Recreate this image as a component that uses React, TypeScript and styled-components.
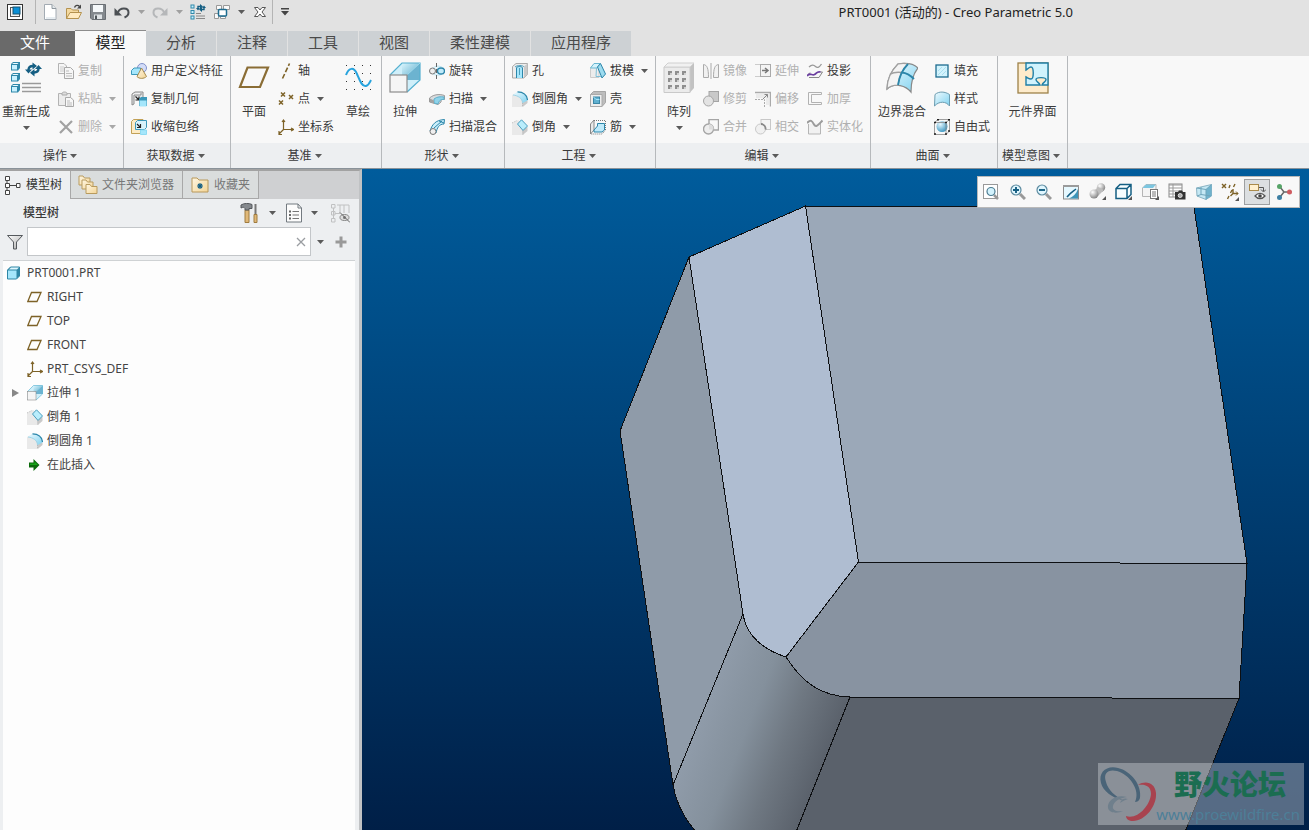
import React from "react";
import styled, { createGlobalStyle } from "styled-components";

const GlobalStyle = createGlobalStyle`
  * { box-sizing: border-box; }
  body {
    margin: 0;
    background: #e2e2e2;
    color: #3a3a3a;
    font: 12px/18px "Noto Sans", "Noto Sans CJK SC", sans-serif;
  }
  button, input {
    font: inherit;
    color: inherit;
    border: 0;
    padding: 0;
    margin: 0;
    background: none;
  }
  h1, h2, ul { margin: 0; padding: 0; font: inherit; list-style: none; }
  svg { display: block; flex: none; }
`;

/* ---------- icons ---------- */

type IconProps = { size?: number };

const S = ({ size = 16, box = 16, children }: { size?: number; box?: number; children: React.ReactNode }) => (
  <svg width={size} height={size} viewBox={`0 0 ${box} ${box}`} fill="none" aria-hidden="true">
    {children}
  </svg>
);

const Arrow = ({ color = "#5a5a5a" }: { color?: string }) => (
  <svg width="7" height="4" viewBox="0 0 7 4" aria-hidden="true">
    <path d="M0 0H7L3.5 4Z" fill={color} />
  </svg>
);

const HiddenDefs = styled.svg`
  position: absolute;
`;

const IconDefs = () => (
  <HiddenDefs width="0" height="0" aria-hidden="true">
    <defs>
      <linearGradient id="ice" x1="0" y1="0" x2="1" y2="1">
        <stop offset="0" stopColor="#f0fbff" />
        <stop offset="1" stopColor="#7fd2f0" />
      </linearGradient>
      <linearGradient id="iceDeep" x1="0" y1="0" x2="1" y2="1">
        <stop offset="0" stopColor="#d9f4fc" />
        <stop offset="1" stopColor="#4aa3c6" />
      </linearGradient>
      <linearGradient id="steel" x1="0" y1="0" x2="1" y2="1">
        <stop offset="0" stopColor="#ffffff" />
        <stop offset="1" stopColor="#a9a9a9" />
      </linearGradient>
      <linearGradient id="gold" x1="0" y1="0" x2="1" y2="1">
        <stop offset="0" stopColor="#fff6e2" />
        <stop offset="1" stopColor="#f3d596" />
      </linearGradient>
      <radialGradient id="ball" cx=".35" cy=".3" r=".8">
        <stop offset="0" stopColor="#e6f8ff" />
        <stop offset="1" stopColor="#2f8fbd" />
      </radialGradient>
      <radialGradient id="grayBall" cx=".35" cy=".3" r=".8">
        <stop offset="0" stopColor="#ffffff" />
        <stop offset="1" stopColor="#777777" />
      </radialGradient>
    </defs>
  </HiddenDefs>
);

const AppIcon = () => (
  <S>
    <rect x=".5" y=".5" width="15" height="15" fill="#fff" stroke="#333" />
    <rect x="3.5" y="3.5" width="9" height="9" fill="#f4f4f4" stroke="#555" />
    <rect x="6" y="3" width="7" height="7" fill="#0a8fd6" stroke="#14506e" />
  </S>
);
const NewIcon = () => (
  <S>
    <path d="M2.500.5H10L14 4.500V15.500H2.500Z" fill="#fff" stroke="#a3abb3" />
    <path d="M10 .5V4.500H14" fill="#e3e8ec" stroke="#8f979e" />
    <path d="M4 13H13V15H4Z" fill="#e8eef2" />
  </S>
);
const OpenIcon = () => (
  <S>
    <path d="M.5 14.500V4.500H5L6.500 6H12.500V14.500Z" fill="#f4d9a0" stroke="#b4924f" />
    <path d="M.5 14.500L4 8.500H15.500L12.500 14.500Z" fill="#ffeac0" stroke="#b4924f" />
    <path d="M8.500 3.500C9.500 1 12 .8 13.500 2.500" stroke="#444" strokeWidth="1.400" />
    <path d="M15 .5V4.500H11Z" fill="#444" />
  </S>
);
const SaveIcon = () => (
  <S>
    <path d="M.5.5H15.500V15.500H2L.5 14Z" fill="#84898e" stroke="#6a6f74" />
    <path d="M3 1H13V8H3Z" fill="#f5f8fa" />
    <path d="M4 10.500H12V15H4Z" fill="#dfe3e6" />
    <path d="M5 11.500H7V15H5Z" fill="#50565b" />
  </S>
);
const UndoIcon = () => (
  <S>
    <path d="M4 8.500C6 3 14.500 3.500 14.500 8.500C14.500 11 13 12.500 10.500 13.500" stroke="#4b4f53" strokeWidth="2" />
    <path d="M.5 4V11.500H8Z" fill="#4b4f53" />
  </S>
);
const RedoIcon = () => (
  <S>
    <path d="M12 8.500C10 3 1.500 3.500 1.500 8.500C1.500 11 3 12.500 5.500 13.500" stroke="#b5b7b9" strokeWidth="2" />
    <path d="M15.500 4V11.500H8Z" fill="#b5b7b9" />
  </S>
);
const RegenSmallIcon = () => (
  <S>
    {[1, 6.500, 12].map((y) => (
      <rect key={y} x="1" y={y} width="3" height="3" fill="#c9f1ff" stroke="#2f88aa" />
    ))}
    <path d="M6 9.500H11M6 12H15M6 14.500H15" stroke="#888" />
    <path d="M8 4.500V2.500H10.500M14 3V5.500H11.500" stroke="#155f83" strokeWidth="1.400" />
    <path d="M10 0L13 2.500L10 5ZM12 3.500V8L9 5.500ZM6 4H10L8 6.500ZM12 4H16L14 1.500Z" fill="#155f83" />
  </S>
);
const WindowsIcon = () => (
  <S>
    <path d="M2.500 1.500H7.500V5.500H2.500ZM9.500 1.500H15.500V5.500H9.500ZM.5 9.500H4.500V14.500H.5ZM6.500 12.500H11.500V14.500H6.500Z" fill="#fafafa" stroke="#999" />
    <rect x="4.500" y="5.500" width="8" height="6.500" rx="1" fill="#fff" stroke="#1d6c90" strokeWidth="1.500" />
  </S>
);
const CloseWinIcon = () => (
  <S>
    <path
      d="M2.500 3.500H6L8 6L10 3.500H13.500L10 8L13.500 12.500H10L8 10L6 12.500H2.500L6 8Z"
      fill="#fff"
      stroke="#555"
    />
  </S>
);
const MoreIcon = () => (
  <S size={10} box={10}>
    <path d="M1 1H9V2.500H1ZM1 4H9L5 8.500Z" fill="#444" />
  </S>
);

const cube = (x: number, y: number) => (
  <g key={`${x}-${y}`}>
    <path d={`M${x} ${y + 2}L${x + 2} ${y}H${x + 9}V${y + 6}L${x + 7} ${y + 8.500}H${x}Z`} fill="#2f88aa" />
    <path d={`M${x + 1} ${y + 3}H${x + 6}V${y + 7.500}H${x + 1}Z`} fill="#c9f1ff" />
    <path d={`M${x + 1} ${y + 2}L${x + 2.500} ${y + 1}H${x + 7.500}L${x + 6.500} ${y + 2}Z`} fill="#eefbff" />
  </g>
);
const RegenIcon = () => (
  <S size={32} box={32}>
    {[0, 11, 22].map((y) => cube(1, y))}
    <path d="M12 21.500H31M12 25.500H31M12 29.500H31" stroke="#9a9a9a" strokeWidth="1.400" />
    <path d="M18.500 8C18.500 5 20 4 23 4M28.500 6.500C28.500 9.500 27 10.500 24 10.500" stroke="#155f83" strokeWidth="2.400" />
    <path d="M22.500 .5L27 4L22.500 7.500ZM24.500 7V14.500L20 10.800ZM15 7.500H22L18.500 11.500ZM25 7H32L28.500 3Z" fill="#155f83" />
  </S>
);
const CopyIcon = () => (
  <S>
    <path d="M.5.5H6L8.500 3V10.500H.5Z" fill="#f6f6f6" stroke="#b3b3b3" />
    <path d="M2 4H6M2 6H6M2 8H6" stroke="#ccc" />
    <path d="M6.500 4.500H12.500L15.500 7.500V15.500H6.500Z" fill="#f6f6f6" stroke="#a9a9a9" />
    <path d="M8 8H11M8 10.500H14M8 13H14" stroke="#bbb" />
  </S>
);
const PasteIcon = () => (
  <S>
    <path d="M.5 2.500H12.500V14.500H.5Z" fill="#ececec" stroke="#b3b3b3" />
    <path d="M4 2.500C4 .5 9 .5 9 2.500V4H4Z" fill="#ddd" stroke="#aaa" />
    <path d="M7.500 6.500H12.500L15.500 9V15.500H7.500Z" fill="#f8f8f8" stroke="#a9a9a9" />
    <path d="M9 10H12M9 12H14M9 14H14" stroke="#bbb" />
  </S>
);
const DeleteIcon = () => (
  <S>
    <path d="M2 2L14 14M14 2L2 14" stroke="#a1a1a1" strokeWidth="2.200" />
  </S>
);
const UdfIcon = () => (
  <S>
    <circle cx="11" cy="5" r="4.500" fill="#d3dcf8" stroke="#8191c9" />
    <path d="M.5 7.500L3 5H9.500V11.500H.5Z" fill="#a5e6fb" stroke="#3c98ba" />
    <path d="M10.500 5L15.500 13.500C13 16 8 16 6 13.500Z" fill="url(#gold)" stroke="#a78a4d" />
  </S>
);
const CopyGeomIcon = () => (
  <S>
    <path d="M1 3L4 1H12V9L10 11M1 3V14L3 13V4H10V2" fill="#e4e6e8" stroke="#8a8a8a" />
    <path d="M4.500 5.500L8 9M8 5.500V9H4.500" stroke="#222" strokeWidth="1.200" />
    <path d="M8 8L10 6H16V15H8Z" fill="#3c98ba" />
    <path d="M8.500 9.500H15.500V15.500H8.500Z" fill="#a5e6fb" />
  </S>
);
const ShrinkIcon = () => (
  <S>
    <path d="M.5 2.500L2.500.5H12V14.500H.5Z" fill="#fdebc4" stroke="#c1a056" />
    <path d="M4.500 3.500L6.500 1.500H15.500V8.500L13.500 10.500H4.500Z" fill="#d8f2fb" stroke="#3c98ba" />
    <path d="M6 5L9.500 8.500M9.500 5V8.500H6" stroke="#222" strokeWidth="1.200" />
    <path d="M9.500 11H15.500V15.500H9.500Z" fill="#a5e6fb" stroke="#8edaf2" />
  </S>
);
const PlaneIcon = () => (
  <S size={32} box={32}>
    <path d="M9.500 5.500H30L22 25H2Z" stroke="#8a6d35" strokeWidth="2.200" />
  </S>
);
const AxisIcon = () => (
  <S>
    <path d="M4.500 15.500L11.500.5" stroke="#7d6227" strokeWidth="1.600" strokeDasharray="5 2" />
  </S>
);
const PointIcon = () => (
  <S>
    <path
      d="M3 1.500L7 5.500M7 1.500L3 5.500M11 4L15 8M15 4L11 8M1 9.500L5 13.500M5 9.500L1 13.500"
      stroke="#7d6227"
      strokeWidth="1.500"
    />
  </S>
);
const CsysIcon = () => (
  <S>
    <path d="M5.500 1V10.500H15M5.500 10.500L1 15M4 3L5.500 1L7 3M13 9L15.500 10.500L13 12M1 12V15.500H4" stroke="#7d6227" strokeWidth="1.200" />
  </S>
);
const SketchIcon = () => (
  <S size={32} box={32}>
    {[3, 11, 19, 27].map((y) =>
      [4, 12, 20, 28].map((x) => <rect key={`${x}-${y}`} x={x} y={y} width="1" height="1" fill="#333" />)
    )}
    <path d="M4 13C7 5 12 5 15 12S20 25 24 24C27 23 28 20 29 18" stroke="#27a3dd" strokeWidth="2" />
  </S>
);
const ExtrudeIcon = ({ size = 32 }: IconProps) => (
  <S size={size} box={32}>
    <path d="M1 13L13 1H31V18L19 30H1Z" fill="#cfeffa" />
    <path d="M13 1H31V18H13Z" fill="url(#iceDeep)" />
    <path d="M18 13L31 1V18H18Z" fill="#6cb3d0" />
    <path d="M1 13L13 1H31V18L18 30" stroke="#55b0d0" strokeWidth="1.200" />
    <path d="M18 13L31 1" stroke="#9fd8ea" />
    <rect x="1" y="13" width="17" height="17" fill="#f5f5f5" stroke="#8c8c8c" strokeWidth="1.200" />
  </S>
);
const RevolveIcon = () => (
  <S>
    <path d="M4 5C8 2 12 3 14 5L13 11C10 13 6 12 4 11Z" fill="#e6f6fc" stroke="#bfe3f0" />
    <ellipse cx="3.500" cy="8" rx="3" ry="3" fill="#eee" stroke="#777" />
    <ellipse cx="12" cy="8" rx="3.500" ry="3" fill="#bfeafa" stroke="#2c86aa" strokeWidth="1.400" />
    <path d="M7.500 0V16" stroke="#666" strokeDasharray="4 2" />
  </S>
);
const SweepIcon = () => (
  <S>
    <path d="M.5 7C5 3 11 3 15.500 4.500V8.500C13 8 12 8.500 12 11L9 13.500L.5 11Z" fill="#d8dbde" stroke="#9a9a9a" />
    <path d="M5 8C8 5.500 12 5.500 15 6V8.500C12 8 10 9.500 9 13L5 12Z" fill="#8fd3ea" stroke="#5fb0cc" />
    <path d="M1 7.500L5 9.500V12.500L1 11Z" fill="#a2a2a2" />
  </S>
);
const BlendIcon = () => (
  <S>
    <path d="M1 12C3 6 6 1 15.500.5L15 5C10 5 8 9 7 14Z" fill="#c9eefa" stroke="#2c86aa" />
    <path d="M5 9L13 2M10 2L15 4" stroke="#2c86aa" />
    <circle cx="4" cy="12.500" r="3" fill="#efefef" stroke="#777" />
  </S>
);
const HoleIcon = () => (
  <S>
    <path d="M.5 3.500L4 .5H15.500V11.500L12 15H.5Z" fill="#ececec" stroke="#aaa" />
    <path d="M12 3.500L15.500.5V11.500L12 15Z" fill="#c9c9c9" />
    <path d="M4.500 15V5C4.500 3 10.500 3 10.500 5V15" fill="#a5e6fb" stroke="#2c86aa" />
    <path d="M3 4C5 2 11 2 12 4M7.500 5V12" stroke="#4d9fbd" />
  </S>
);
const RoundIcon = () => (
  <S>
    <path d="M0 4L6 1L15 8V12L11 16H0Z" fill="#e9e9e9" />
    <path d="M10 10L15.500 8V12L10.500 16Z" fill="#c9c9c9" />
    <path d="M5.500.5C11 1 15 4 15.500 9.500L10.500 12C10.500 7.500 6 4.500 1 4Z" fill="url(#ice)" />
    <path d="M5.500 .8C11 1 15 4 15.500 9" stroke="#2c86aa" strokeWidth="1.200" />
    <path d="M1 4C6 4.500 10.500 7.500 10.500 12" stroke="#9fd3e6" />
    <path d="M10.500 12V16" stroke="#bbb" strokeDasharray="1 1" />
  </S>
);
const ChamferIcon = () => (
  <S>
    <path d="M0 4L6 1L15 8V12L11 16H0Z" fill="#e9e9e9" />
    <path d="M10 10L15.500 8V12L10.500 16Z" fill="#c9c9c9" />
    <path d="M5.500 5L9.500.8L15.500 7L11 11.500Z" fill="#b9edfc" stroke="#4a9dbd" />
    <path d="M0 4L5 1.500M11 11.500V16" stroke="#bbb" strokeDasharray="1 1" />
  </S>
);
const DraftIcon = () => (
  <S>
    <path d="M.5 5L4 1H9V14.500H.5Z" fill="#ececec" stroke="#ccc" />
    <path d="M.5 5L4 .5H10L7 5Z" fill="#d5f3fc" stroke="#6ab6d1" />
    <path d="M7.500 4L10.500.5L15.500 11L12 15Z" fill="#9ddcf0" stroke="#2c86aa" />
    <path d="M6.500 5L6 13.500H11" stroke="#7fc0d8" />
  </S>
);
const ShellIcon = () => (
  <S>
    <path d="M.5 3.500L3.500.5H15.500V11.500L12 15.500H.5Z" fill="#bdbdbd" stroke="#a5a5a5" />
    <path d="M.5 3.500H12V15.500H.5Z" fill="#ededed" stroke="#aaa" />
    <rect x="3.500" y="6" width="6" height="6.500" fill="#5fb0d0" stroke="#3c86a5" />
    <path d="M3.500 6L6 8.500H9.500" stroke="#a5e6fb" />
  </S>
);
const RibIcon = () => (
  <S>
    <path d="M.5 5L4 1V11L.5 15Z" fill="#e9e9e9" stroke="#888" />
    <path d="M4 11L7.500 7V4.500H14.500V11L12 13H4Z" fill="#bfeafa" stroke="#2c86aa" />
    <path d="M4 1.500H15.500V11L12 15H.5" stroke="#777" strokeDasharray="1 1" />
  </S>
);
const PatternIcon = () => (
  <S size={32} box={32}>
    <path d="M1 5L5 1H31V26L27 30.500H1Z" fill="#c2c2c2" />
    <path d="M1 5H27V30.500H1Z" fill="#ebebeb" stroke="#c9c9c9" />
    <path d="M1 5L5 1H31L27 5Z" fill="#f1f1f1" stroke="#d0d0d0" />
    {[9, 16, 23].map((y) =>
      [5, 12, 19].map((x) => (
        <g key={`${x}-${y}`}>
          <rect x={x} y={y} width="4" height="4" fill="#8f8f8f" />
          <rect x={x + 2} y={y + 2} width="2" height="2" fill="#cfcfcf" />
        </g>
      ))
    )}
  </S>
);
const MirrorIcon = () => (
  <S>
    <path d="M.5 1.500C4 2 5.500 5 5.500 14.500H.5ZM15.500 1.500C12 2 10.500 5 10.500 14.500H15.500Z" fill="#f1f1f1" stroke="#aaa" />
    <path d="M8 0V16" stroke="#aaa" />
  </S>
);
const ExtendIcon = () => (
  <S>
    <path d="M0 1.500H5M0 13.500H5" stroke="#ccc" />
    <rect x="5.500" y="1.500" width="10" height="12" fill="#f3f3f3" stroke="#aaa" />
    <path d="M7 7.500H12M10 5L13 7.500L10 10" stroke="#777" strokeWidth="1.500" />
  </S>
);
const ProjectIcon = () => (
  <S>
    <path d="M2 4C5 1 7 2 8.500 3.500S12 5 14.500 1" stroke="#999" strokeWidth="1.300" />
    <path d="M2 14.500H12L15.500 9H13M1 12L3 9.500" stroke="#888" />
    <path d="M0 13C3 9 5 13 7.500 11.500S10 8 13.500 9" stroke="#6b3fa0" strokeWidth="1.800" />
  </S>
);
const TrimIcon = () => (
  <S>
    <rect x="6" y=".5" width="9.500" height="10" fill="#c9c9c9" stroke="#a5a5a5" />
    <circle cx="5.500" cy="10" r="5" fill="#e3e3e3" stroke="#a5a5a5" />
  </S>
);
const OffsetIcon = () => (
  <S>
    <path d="M0 1.500H15.500V15.500" stroke="#aaa" strokeWidth="1.500" />
    <path d="M1 3H14V14H11V7H1Z" fill="#ebebeb" />
    <path d="M0 8.500H9.500V16" stroke="#aaa" strokeDasharray="2 1" />
    <path d="M8 8L12.500 3.500M9.500 3.500H12.500V6.500" stroke="#888" />
  </S>
);
const ThickenIcon = () => (
  <S>
    <path d="M14.500 1.500H1.500V13.500H14.500V11.500H4.500V3.500H14.500Z" stroke="#b2b2b2" />
  </S>
);
const MergeIcon = () => (
  <S>
    <path d="M6 5V.5H15.500V11H11" stroke="#a5a5a5" strokeWidth="1.400" />
    <circle cx="5.500" cy="10" r="5" fill="#eee" stroke="#a5a5a5" strokeWidth="1.400" />
    <path d="M6 5C9 5 11 8 10.500 10.500H6Z" fill="#ddd" />
  </S>
);
const IntersectIcon = () => (
  <S>
    <rect x="6" y=".5" width="9.500" height="10" fill="#f4f4f4" stroke="#c8c8c8" />
    <circle cx="5.500" cy="10" r="5" fill="#f0f0f0" stroke="#c8c8c8" />
    <path d="M6 5C9 5 11 8 10.500 10.500" stroke="#888" strokeWidth="1.800" />
  </S>
);
const SolidifyIcon = () => (
  <S>
    <path d="M1.500 5V15H13.500V4" fill="#f1f1f1" stroke="#b5b5b5" />
    <path d="M0 4C4 0 5 2 7 5.500S11 6 15.500 1.500" stroke="#9b9b9b" strokeWidth="2" />
  </S>
);
const BoundaryIcon = () => (
  <S size={32} box={32}>
    <path d="M1 27C1 15 6 8 12 2C18 1 26 0 32 6C27 12 25 21 25 30C20 24 9 20 1 27Z" fill="url(#ice)" stroke="#888" strokeWidth="1.200" />
    <path d="M1 27C1 15 6 8 12 2C16 1 19 1 22 2C15 9 13 16 12 23C8 23 4 24 1 27Z" fill="#f4f4f4" stroke="#a0a0a0" strokeWidth="1.200" />
    <path d="M4 12C8 10 12 10 16 10.500" stroke="#a0a0a0" strokeWidth="1.400" />
    <path d="M22 2C15 9 13 16 12 23M16 10.500C21 11 25 14 28 17" stroke="#2c86aa" strokeWidth="1.800" />
  </S>
);
const FillIcon = () => (
  <S>
    <rect x="2" y="2" width="12" height="12" fill="#d2f3fd" stroke="#1d6c90" strokeWidth="1.300" />
    <path d="M4 12L12 4M4 8L8 4M8 12L12 8" stroke="#a9dff0" />
  </S>
);
const StyleIcon = () => (
  <S>
    <path d="M.5 15L1 3.500C5 0 11 .5 15.500 3.500V15C12 10 5 10 .5 15Z" fill="url(#ice)" stroke="#6c9cb0" />
  </S>
);
const FreestyleIcon = () => (
  <S>
    <circle cx="8" cy="7.500" r="5.500" fill="url(#ball)" />
    <path d="M.5 3.500L4 .5H15.500V12L12 15.500H.5ZM.5 3.500H12V15.500M12 3.500L15.500.5" stroke="#888" strokeWidth=".8" />
    <path d="M0 3.500H2M3 .8H5M14 .8H16M11 3.500H13M0 15H2M11 15H13M14 12H16" stroke="#222" strokeWidth="1.500" />
  </S>
);
const InterfaceIcon = () => (
  <S size={32} box={32}>
    <rect x="1" y="1" width="30" height="30" fill="#fdebcb" stroke="#9d8149" strokeWidth="1.300" />
    <path
      d="M9 1H31V23H25C26 20 29 20 29 17.500C29 15 19 15 19 17.500C19 20 22 20 23 23H9V15C11 16 12 17 14 17C17 17 17 5 14 5C12 5 11 7 9 8Z"
      fill="#d0f3fd"
      stroke="#1f7fa6"
      strokeWidth="1.400"
    />
  </S>
);

const TreeTabIcon = () => (
  <S size={20} box={20}>
    <path d="M4 5.500V15M6 10.500H14" stroke="#444" />
    <path d="M2.500 1.500H6.500V5.500H2.500ZM2.500 8.500H6.500V12.500H2.500ZM2.500 15.500H6.500V19.500H2.500ZM13.500 8.500H17V12.500H13.500Z" fill="#fff" stroke="#444" />
  </S>
);
const folder = (x: number, y: number) => (
  <path
    key={x}
    d={`M${x} ${y + 9}V${y}H${x + 4}L${x + 5.500} ${y + 2}H${x + 11}V${y + 9}Z`}
    fill="url(#gold)"
    stroke="#b89b5e"
  />
);
const FoldersIcon = () => (
  <S size={20} box={20}>
    {folder(1, 1)}
    {folder(4, 5)}
    {folder(8, 9.500)}
  </S>
);
const FavIcon = () => (
  <S size={20} box={20}>
    <path d="M2 17V3H7L9 5H18V17Z" fill="url(#gold)" stroke="#b8985a" />
    <path d="M10 8V14M7 11H13M8 9L12 13M12 9L8 13" stroke="#155f83" strokeWidth="1.100" />
  </S>
);
const ToolsIcon = () => (
  <S size={20} box={20}>
    <path d="M5 7H9V19.500H5Z" fill="#e0b878" stroke="#a07c40" />
    <path d="M1 2C4 0 9 0 12 1.500V5.500H9V7H5V5.500C4 4 3 4 1 5Z" fill="#85898e" stroke="#54585c" />
    <path d="M15.500 1V12" stroke="#777" strokeWidth="2" />
    <path d="M14 11.500H17V19.500H14Z" fill="#e0b878" stroke="#a07c40" />
  </S>
);
const ListIcon = () => (
  <S size={20} box={20}>
    <path d="M2.500 1H14L17.500 5V19H2.500Z" fill="#fcfcfc" stroke="#737a80" />
    <path d="M14 1V5H17.500" stroke="#737a80" />
    <path d="M8.500 8.500H15M8.500 12H15M8.500 15.500H15" stroke="#777" />
    <path d="M5 7.500H7V9.500H5ZM5 11H7V13H5ZM5 14.500H7V16.500H5Z" fill="#666" />
  </S>
);
const HideTreeIcon = () => (
  <S size={20} box={20}>
    <path d="M1.500 1.500H5V5H1.500ZM1.500 8.500H5V12H1.500ZM1.500 15.500H5V19H1.500ZM3.500 5V16M5 10.500H10M10 2V10M14 2V10M19 2V10M7 2H19" stroke="#c0c1c2" />
    <ellipse cx="14.500" cy="14.500" rx="4.500" ry="3" fill="#ddd" stroke="#888" />
    <circle cx="14.500" cy="14.500" r="1.500" fill="#777" />
    <path d="M10 9.500L20 19.500" stroke="#666" />
  </S>
);
const FunnelIcon = () => (
  <S>
    <path d="M.5 1.500H15.500L9.500 8V15H6.500V8Z" fill="url(#steel)" stroke="#55595d" />
  </S>
);
const ClearIcon = () => (
  <S size={10} box={10}>
    <path d="M1 1L9 9M9 1L1 9" stroke="#9a9da1" strokeWidth="1.300" />
  </S>
);
const PlusIcon = () => (
  <S size={12} box={12}>
    <path d="M6 .5V11.500M.5 6H11.500" stroke="#999" strokeWidth="3" />
  </S>
);

const PartIcon = () => (
  <S>
    <path d="M.5 5L3.500 2H12.500V11L9.500 14H.5Z" fill="#2e86a5" stroke="#2e86a5" />
    <path d="M1 5.500H9.500V13.500H1Z" fill="#a5e6fb" />
    <path d="M2 4.500L4 2.500H12L10 4.500Z" fill="#dff7ff" />
  </S>
);
const SmallPlaneIcon = () => (
  <S>
    <path d="M4.500 3.500H14L10 12.500H.8Z" stroke="#7d6227" strokeWidth="1.300" />
  </S>
);
const InsertIcon = () => (
  <S>
    <path d="M2 5.500H6.500V2L12.500 8L6.500 14V10.500H2Z" fill="#0b6a0b" />
    <path d="M3 6.500H7.500V4.500L11 8H3Z" fill="#17a317" />
  </S>
);

const lens = (extra: React.ReactNode) => (
  <>
    <path d="M10 10L15 15" stroke="#999" strokeWidth="3" />
    <circle cx="6" cy="6" r="5" fill="#e0f6fe" stroke="#5d8ba0" strokeWidth="1.200" />
    {extra}
  </>
);
const RefitIcon = () => (
  <S>
    <rect x=".5" y=".5" width="14" height="14" fill="#fff" stroke="#999" />
    <path d="M11 11L15 15" stroke="#999" strokeWidth="2.500" />
    <circle cx="8" cy="7.500" r="4" fill="#d4f3fd" stroke="#4c7c91" strokeWidth="1.200" />
  </S>
);
const ZoomInIcon = () => <S>{lens(<path d="M3 6H9M6 3V9" stroke="#155f83" strokeWidth="1.900" />)}</S>;
const ZoomOutIcon = () => <S>{lens(<path d="M3 6H9" stroke="#155f83" strokeWidth="1.900" />)}</S>;
const RepaintIcon = () => (
  <S>
    <rect x=".5" y="1.500" width="15" height="13.500" fill="#e5f8ff" stroke="#8b8b8b" />
    <path d="M0 1H16V3H0Z" fill="#9b9b9b" />
    <path d="M15 5V14.500H6C10 13 13 10 15 5Z" fill="#3d95b8" />
    <path d="M4 13C7 9 9 8 13 5" stroke="#155f83" strokeWidth="1.500" />
  </S>
);
const corner = <path d="M17 13V17H13Z" fill="#555" />;
const ShadeIcon = () => (
  <S size={18} box={18}>
    <circle cx="12" cy="4.500" r="4.200" fill="url(#grayBall)" />
    <path d="M6 7L9 4L15 7L9 13Z" fill="#bdbdbd" />
    <circle cx="5" cy="11" r="4.500" fill="url(#grayBall)" />
    {corner}
  </S>
);
const DisplayIcon = () => (
  <S size={18} box={18}>
    <path d="M1 5.500L5 1.500H16V11.500L12 15.500H1ZM1 5.500H12V15.500M12 5.500L16 1.500" fill="#f8feff" stroke="#155f83" strokeWidth="1.500" />
    {corner}
  </S>
);
const SavedIcon = () => (
  <S size={18} box={18}>
    <path d="M.5 5L4 1.500H14V11L11 13.500H.5Z" fill="#f4f4f4" stroke="#b5b5b5" />
    <path d="M.5 5L4 1.500H14L11 5Z" fill="#7cc6e0" />
    <rect x="8.500" y="6.500" width="7" height="9" fill="#fff" stroke="#777" />
    <path d="M10 9H14M10 11H14M10 13H14" stroke="#777" />
    {corner}
  </S>
);
const CameraIcon = () => (
  <S size={18} box={18}>
    <rect x="1" y="1" width="13" height="13" fill="#fff" stroke="#888" />
    <path d="M1 2H14M1 5H14M1 8H14M1 11H8M5 1V14" stroke="#999" />
    <path d="M7 9H10L11 7.500H14L15 9H17.500V16.500H7Z" fill="#333" />
    <circle cx="12.200" cy="12.500" r="2" fill="#aaa" stroke="#ddd" />
  </S>
);
const PerspIcon = () => (
  <S>
    <path d="M.5 4L15.500 .5V12L10 15.500L1 12Z" fill="#c5e8f4" stroke="#8ab3c4" />
    <path d="M10 5.500L15.500 .5V12L10 15.500Z" fill="#6fb2cc" />
    <path d="M.5 4L10 5.500V15.500M10 5.500L15.500 .5M5 3V10.500M1 12L5 10.500L15 12" stroke="#6fa5ba" />
  </S>
);
const DatumIcon = () => (
  <S size={18} box={18}>
    <path d="M1 1L5 5M5 1L1 5M14 1L12.500 4M11 7L9.500 10M8 13L6.500 16M12 6V10.500H17M12 10.500L9.500 13" stroke="#7d6227" strokeWidth="1.400" />
    <path d="M9 2L8 5" stroke="#7d6227" strokeWidth="1.400" />
    <path d="M15 8.500L17 10.500L15 12.500" stroke="#7d6227" />
    <path d="M18 14V18H14Z" fill="#555" />
  </S>
);
const AnnotIcon = () => (
  <S size={18} box={18}>
    <rect x="1.500" y="1.500" width="9" height="6" fill="#fff0cf" stroke="#a98a4b" />
    <path d="M11 4.500H15.500V8M13 6.500L15.500 9L18 6.500" stroke="#555" />
    <path d="M7 13C10 9.500 14 9.500 17 13C14 16.500 10 16.500 7 13Z" fill="#fff" stroke="#555" strokeWidth="1.300" />
    <circle cx="12" cy="13" r="1.800" fill="#444" />
  </S>
);
const SpinIcon = () => (
  <S size={18} box={18}>
    <path d="M5 4L9 9L5 14M9 9H14" stroke="#666" strokeWidth="1.500" />
    <circle cx="4.500" cy="3.500" r="2.500" fill="#57a468" />
    <circle cx="14.500" cy="9" r="2.500" fill="#cf5b60" />
    <circle cx="4.500" cy="14.500" r="2.500" fill="#3d7fa3" />
  </S>
);

/* ---------- layout ---------- */

const Shell = styled.div`
  display: flex;
  flex-direction: column;
  height: 100vh;
  overflow: hidden;
`;

const TitleBar = styled.header`
  display: flex;
  align-items: center;
  height: 30px;
  padding: 0 0 6px 3px;
  flex: none;
`;

const QuickButton = styled.button<{ $narrow?: boolean }>`
  display: flex;
  align-items: center;
  justify-content: center;
  width: ${(p) => (p.$narrow ? 14 : 24)}px;
  height: 24px;
`;

const Divider = styled.span`
  width: 1px;
  height: 24px;
  background: #b4b4b4;
`;

const AppMark = styled.span`
  width: 32px;
  padding-left: 4px;
`;

const LeadDivider = styled(Divider)`
  margin-right: 2px;
`;

const WindowTitle = styled.h1`
  flex: 1;
  padding-right: 236px;
  text-align: right;
  font-size: 13px;
  color: #222;
`;

const RibbonTabs = styled.nav`
  display: flex;
  height: 26px;
  flex: none;
  padding-right: 20px;
`;

const RibbonTab = styled.button<{ $kind?: "file" | "active"; $w: number }>`
  width: ${(p) => p.$w}px;
  padding: 0 ${(p) => (p.$kind === "file" ? 5 : 0)}px 4px 0;
  font-size: 15px;
  line-height: 20px;
  color: ${(p) => (p.$kind === "file" ? "#fff" : p.$kind === "active" ? "#222" : "#4a4a4a")};
  background: ${(p) => (p.$kind === "file" ? "#6a6a6a" : p.$kind === "active" ? "#f8f8f8" : "#cdd1d4")};
  border-top: 1px solid ${(p) => (p.$kind === "active" ? "#8c8c8c" : "transparent")};
  border-right: ${(p) => (p.$kind ? 0 : 1)}px solid #e2e2e2;
  background-clip: padding-box;
`;

const Ribbon = styled.div`
  display: flex;
  flex: none;
  background: #f8f8f8;
  border-bottom: 1px solid #8a9299;
`;

const Group = styled.section<{ $w?: number }>`
  display: flex;
  flex-direction: column;
  ${(p) => (p.$w ? `width: ${p.$w}px; border-right: 1px solid #b6b9bc;` : "flex: 1;")}
`;

const GroupBody = styled.div`
  display: flex;
  height: 87px;
  white-space: nowrap;
`;

const GroupFooter = styled.button`
  display: flex;
  align-items: center;
  justify-content: center;
  gap: 3px;
  height: 25px;
  padding-right: 3px;
  background: #edeff1;
  white-space: nowrap;
`;

const GroupFooterFill = styled.div`
  height: 25px;
  background: #edeff1;
`;

const LargeCommand = styled.button<{ $w: number }>`
  display: flex;
  flex-direction: column;
  align-items: center;
  width: ${(p) => p.$w}px;
  padding-top: 6px;

  span { margin: 9px 0 5px; }
`;

const Column = styled.div<{ $w: number; $inset?: number }>`
  width: ${(p) => p.$w}px;
  padding: 1px 0 0 ${(p) => p.$inset ?? 1}px;
`;

const SmallCommand = styled.button<{ $off?: boolean }>`
  display: flex;
  align-items: center;
  gap: 4px;
  height: 28px;
  color: ${(p) => (p.$off ? "#b0b0b0" : "inherit")};

  span + svg { margin-left: 3px; }
`;

const Workspace = styled.main`
  display: flex;
  flex: 1;
  min-height: 0;
`;

const SidePanel = styled.aside`
  display: flex;
  flex-direction: column;
  width: 362px;
  flex: none;
  background: #edeff1;
  border-top: 2px solid #a2a2a2;
  border-right: 3px solid #c0c2c4;
`;

const PanelTabs = styled.div`
  display: flex;
  height: 28px;
  flex: none;
  background: #cfd0d2;
`;

const PanelTab = styled.button<{ $active?: boolean; $w: number }>`
  display: flex;
  align-items: center;
  gap: ${(p) => (p.$active ? 3 : 4)}px;
  width: ${(p) => p.$w}px;
  padding-left: ${(p) => (p.$active ? 3 : 7)}px;
  white-space: nowrap;
  color: ${(p) => (p.$active ? "#333" : "#777")};
  background: ${(p) => (p.$active ? "#edeff1" : "#dadddd")};
  border-right: 1px solid #a8a8a8;
  border-bottom: ${(p) => (p.$active ? 0 : 1)}px solid #a8a8a8;
`;

const PanelHeader = styled.div`
  display: flex;
  align-items: center;
  height: 28px;
  flex: none;
  padding: 0 2px 0 23px;

  h2 { flex: 1; font-weight: 500; }
`;

const ToolButton = styled.button<{ $w?: number }>`
  display: flex;
  align-items: center;
  justify-content: center;
  width: ${(p) => p.$w ?? 22}px;
  height: 24px;
`;

const SearchRow = styled.div`
  display: flex;
  align-items: center;
  height: 29px;
  flex: none;
  padding: 0 7px 0 7px;
`;

const SearchBox = styled.div`
  display: flex;
  align-items: center;
  flex: 1;
  height: 29px;
  margin-left: 4px;
  background: #fff;
  border: 1px solid #c3c6c9;

  input { flex: 1; min-width: 0; height: 100%; padding: 0 6px; outline: 0; }
`;

const Tree = styled.ul`
  flex: 1;
  margin: 4px 4px 0 3px;
  background: #fdfdfd;
  border-top: 1px solid #cfd2d4;
`;

const TreeRow = styled.li<{ $root?: boolean }>`
  display: flex;
  align-items: center;
  gap: 4px;
  height: 24px;
  padding-left: ${(p) => (p.$root ? 4 : 0)}px;
  color: #444;
`;

const Expander = styled.span`
  display: flex;
  justify-content: center;
  width: 20px;
  padding-left: 4px;
`;

const Viewport = styled.section`
  position: relative;
  flex: 1;
  min-width: 0;
  overflow: hidden;
  background: #003f75;

  > svg { width: 100%; height: 100%; }
`;

const ViewToolbar = styled.div`
  position: absolute;
  top: 7px;
  right: 9px;
  display: flex;
  width: 323px;
  height: 32px;
  background: #f8f8f8;
  border: 1px solid #b9b9b9;
  padding: 2px 2px 2px 0;
`;

const ViewButton = styled.button<{ $on?: boolean }>`
  display: flex;
  flex: 1;
  align-items: center;
  justify-content: center;
  background: ${(p) => (p.$on ? "#dcdfe1" : "none")};
  outline: ${(p) => (p.$on ? "1px solid #9d9fa1" : "0")};
  outline-offset: -1px;
`;

const Watermark = styled.div`
  position: absolute;
  right: 5px;
  bottom: 5px;
  display: flex;
  justify-content: space-between;
  width: 206px;
  height: 62px;
  padding-right: 4px;
  background: rgba(205, 210, 215, 0.42);
`;

const WatermarkText = styled.div`
  display: flex;
  flex-direction: column;
  align-items: flex-end;
  width: 136px;
`;

const WatermarkName = styled.strong`
  padding-right: 14px;
  font: 900 28px/41px "Noto Sans CJK SC", sans-serif;
  white-space: nowrap;
  color: #1b6d51;
`;

const WatermarkUrl = styled.span`
  font: 15px/20px "Noto Sans", sans-serif;
  color: #4d7f98;
`;

/* ---------- parts ---------- */

const Large = ({ icon, label, w, menu }: { icon: React.ReactNode; label: string; w: number; menu?: boolean }) => (
  <LargeCommand $w={w}>
    {icon}
    <span>{label}</span>
    {menu && <Arrow />}
  </LargeCommand>
);

const Small = ({ icon, label, off, menu }: { icon: React.ReactNode; label: string; off?: boolean; menu?: boolean }) => (
  <SmallCommand $off={off}>
    {icon}
    <span>{label}</span>
    {menu && <Arrow color={off ? "#a8a8a8" : undefined} />}
  </SmallCommand>
);

const RibbonGroup = ({ w, title, children }: { w: number; title: string; children: React.ReactNode }) => (
  <Group $w={w}>
    <GroupBody>{children}</GroupBody>
    <GroupFooter>
      {title}
      <Arrow />
    </GroupFooter>
  </Group>
);

const Model = () => (
  <svg viewBox="362 169 947 661" preserveAspectRatio="xMinYMin slice" role="img" aria-label="PRT0001">
    <defs>
      <linearGradient id="sky" x1="0" y1="0" x2="0" y2="1">
        <stop offset="0" stopColor="#005c9c" />
        <stop offset="1" stopColor="#001f47" />
      </linearGradient>
      <linearGradient id="fillet" gradientUnits="userSpaceOnUse" x1="743" y1="614" x2="864" y2="662">
        <stop offset="0" stopColor="#8f9ba9" />
        <stop offset=".35" stopColor="#84909c" />
        <stop offset=".65" stopColor="#6f7882" />
        <stop offset="1" stopColor="#5a616b" />
      </linearGradient>
    </defs>
    <rect x="362" y="169" width="947" height="661" fill="url(#sky)" />
    <g stroke="#0d0f12" strokeWidth="1" strokeLinejoin="round" shapeRendering="crispEdges">
      <path d="M689 257L620 431L673 785L743 614Z" fill="#8f9ba9" />
      <path d="M805.500 206L1194 207L1247 563.500L858.500 562Z" fill="#9ba8b8" />
      <path d="M858.500 562L1247 563.500L1239 698.500L850 697C820 696 802 682 786 657Z" fill="#8893a1" />
      <path d="M850 697L1239 698.500L1185 832H796Z" fill="#5a616b" />
      <path d="M743 614C746 636 764 650 786 657C802 682 820 696 850 697L796 832H696C684 818 676 804 673 785Z" fill="url(#fillet)" />
      <path d="M805.500 206L689 257L743 614C746 636 764 650 786 657L858.500 562Z" fill="#afbdd1" />
    </g>
  </svg>
);

const ribbonTabs: { label: string; w: number; kind?: "file" | "active" }[] = [
  { label: "文件", w: 75, kind: "file" },
  { label: "模型", w: 71, kind: "active" },
  { label: "分析", w: 71 },
  { label: "注释", w: 71 },
  { label: "工具", w: 71 },
  { label: "视图", w: 71 },
  { label: "柔性建模", w: 101 },
  { label: "应用程序", w: 101 },
];

const treeItems: { label: string; icon: React.ReactNode; open?: boolean }[] = [
  { label: "RIGHT", icon: <SmallPlaneIcon /> },
  { label: "TOP", icon: <SmallPlaneIcon /> },
  { label: "FRONT", icon: <SmallPlaneIcon /> },
  { label: "PRT_CSYS_DEF", icon: <CsysIcon /> },
  { label: "拉伸 1", icon: <ExtrudeIcon size={16} />, open: true },
  { label: "倒角 1", icon: <ChamferIcon /> },
  { label: "倒圆角 1", icon: <RoundIcon /> },
  { label: "在此插入", icon: <InsertIcon /> },
];

const viewTools: [string, React.ReactNode, boolean?][] = [
  ["重新调整", <RefitIcon />],
  ["放大", <ZoomInIcon />],
  ["缩小", <ZoomOutIcon />],
  ["重画", <RepaintIcon />],
  ["渲染", <ShadeIcon />],
  ["显示样式", <DisplayIcon />],
  ["已保存方向", <SavedIcon />],
  ["视图管理器", <CameraIcon />],
  ["透视图", <PerspIcon />],
  ["基准显示", <DatumIcon />],
  ["注释显示", <AnnotIcon />, true],
  ["旋转中心", <SpinIcon />],
];

export default function App() {
  return (
    <Shell>
      <GlobalStyle />
      <IconDefs />
      <TitleBar>
        <AppMark><AppIcon /></AppMark>
        <LeadDivider />
        <QuickButton aria-label="新建"><NewIcon /></QuickButton>
        <QuickButton aria-label="打开"><OpenIcon /></QuickButton>
        <QuickButton aria-label="保存"><SaveIcon /></QuickButton>
        <QuickButton aria-label="撤消"><UndoIcon /></QuickButton>
        <QuickButton aria-label="撤消列表" $narrow><Arrow color="#a0a0a0" /></QuickButton>
        <QuickButton aria-label="重做"><RedoIcon /></QuickButton>
        <QuickButton aria-label="重做列表" $narrow><Arrow color="#a0a0a0" /></QuickButton>
        <QuickButton aria-label="重新生成"><RegenSmallIcon /></QuickButton>
        <QuickButton aria-label="窗口"><WindowsIcon /></QuickButton>
        <QuickButton aria-label="窗口列表" $narrow><Arrow /></QuickButton>
        <QuickButton aria-label="关闭"><CloseWinIcon /></QuickButton>
        <Divider />
        <QuickButton aria-label="自定义"><MoreIcon /></QuickButton>
        <WindowTitle>PRT0001 (活动的) - Creo Parametric 5.0</WindowTitle>
      </TitleBar>

      <RibbonTabs>
        {ribbonTabs.map((t) => (
          <RibbonTab key={t.label} $w={t.w} $kind={t.kind}>{t.label}</RibbonTab>
        ))}
      </RibbonTabs>

      <Ribbon>
        <RibbonGroup w={124} title="操作">
          <Large w={52} icon={<RegenIcon />} label="重新生成" menu />
          <Column $w={71} $inset={6}>
            <Small off icon={<CopyIcon />} label="复制" />
            <Small off icon={<PasteIcon />} label="粘贴" menu />
            <Small off icon={<DeleteIcon />} label="删除" menu />
          </Column>
        </RibbonGroup>
        <RibbonGroup w={107} title="获取数据">
          <Column $w={106} $inset={7}>
            <Small icon={<UdfIcon />} label="用户定义特征" />
            <Small icon={<CopyGeomIcon />} label="复制几何" />
            <Small icon={<ShrinkIcon />} label="收缩包络" />
          </Column>
        </RibbonGroup>
        <RibbonGroup w={151} title="基准">
          <Large w={46} icon={<PlaneIcon />} label="平面" />
          <Column $w={58}>
            <Small icon={<AxisIcon />} label="轴" />
            <Small icon={<PointIcon />} label="点" menu />
            <Small icon={<CsysIcon />} label="坐标系" />
          </Column>
          <Large w={46} icon={<SketchIcon />} label="草绘" />
        </RibbonGroup>
        <RibbonGroup w={123} title="形状">
          <Large w={46} icon={<ExtrudeIcon />} label="拉伸" />
          <Column $w={76}>
            <Small icon={<RevolveIcon />} label="旋转" />
            <Small icon={<SweepIcon />} label="扫描" menu />
            <Small icon={<BlendIcon />} label="扫描混合" />
          </Column>
        </RibbonGroup>
        <RibbonGroup w={151} title="工程">
          <Column $w={78} $inset={7}>
            <Small icon={<HoleIcon />} label="孔" />
            <Small icon={<RoundIcon />} label="倒圆角" menu />
            <Small icon={<ChamferIcon />} label="倒角" menu />
          </Column>
          <Column $w={72} $inset={7}>
            <Small icon={<DraftIcon />} label="拔模" menu />
            <Small icon={<ShellIcon />} label="壳" />
            <Small icon={<RibIcon />} label="筋" menu />
          </Column>
        </RibbonGroup>
        <RibbonGroup w={215} title="编辑">
          <Large w={46} icon={<PatternIcon />} label="阵列" menu />
          <Column $w={52}>
            <Small off icon={<MirrorIcon />} label="镜像" />
            <Small off icon={<TrimIcon />} label="修剪" />
            <Small off icon={<MergeIcon />} label="合并" />
          </Column>
          <Column $w={52}>
            <Small off icon={<ExtendIcon />} label="延伸" />
            <Small off icon={<OffsetIcon />} label="偏移" />
            <Small off icon={<IntersectIcon />} label="相交" />
          </Column>
          <Column $w={64}>
            <Small icon={<ProjectIcon />} label="投影" />
            <Small off icon={<ThickenIcon />} label="加厚" />
            <Small off icon={<SolidifyIcon />} label="实体化" />
          </Column>
        </RibbonGroup>
        <RibbonGroup w={127} title="曲面">
          <Large w={62} icon={<BoundaryIcon />} label="边界混合" />
          <Column $w={64}>
            <Small icon={<FillIcon />} label="填充" />
            <Small icon={<StyleIcon />} label="样式" />
            <Small icon={<FreestyleIcon />} label="自由式" />
          </Column>
        </RibbonGroup>
        <RibbonGroup w={70} title="模型意图">
          <Large w={69} icon={<InterfaceIcon />} label="元件界面" />
        </RibbonGroup>
        <Group>
          <GroupBody />
          <GroupFooterFill />
        </Group>
      </Ribbon>

      <Workspace>
        <SidePanel>
          <PanelTabs>
            <PanelTab $active $w={71}><TreeTabIcon />模型树</PanelTab>
            <PanelTab $w={112}><FoldersIcon />文件夹浏览器</PanelTab>
            <PanelTab $w={76}><FavIcon />收藏夹</PanelTab>
          </PanelTabs>
          <PanelHeader>
            <h2>模型树</h2>
            <ToolButton aria-label="设置"><ToolsIcon /></ToolButton>
            <ToolButton aria-label="设置列表"><Arrow /></ToolButton>
            <ToolButton aria-label="显示"><ListIcon /></ToolButton>
            <ToolButton aria-label="显示列表" $w={18}><Arrow /></ToolButton>
            <ToolButton aria-label="隐藏" $w={34}><HideTreeIcon /></ToolButton>
          </PanelHeader>
          <SearchRow>
            <FunnelIcon />
            <SearchBox>
              <input type="text" aria-label="搜索模型树" />
              <ToolButton aria-label="清除" $w={18}><ClearIcon /></ToolButton>
            </SearchBox>
            <ToolButton aria-label="搜索选项" $w={19}><Arrow /></ToolButton>
            <ToolButton aria-label="添加"><PlusIcon /></ToolButton>
          </SearchRow>
          <Tree>
            <TreeRow $root><PartIcon />PRT0001.PRT</TreeRow>
            {treeItems.map((item) => (
              <TreeRow key={item.label}>
                <Expander>
                  {item.open && (
                    <svg width="7" height="8" viewBox="0 0 7 8"><path d="M0 0L7 4L0 8Z" fill="#888" /></svg>
                  )}
                </Expander>
                {item.icon}
                {item.label}
              </TreeRow>
            ))}
          </Tree>
        </SidePanel>

        <Viewport>
          <Model />
          <ViewToolbar>
            {viewTools.map(([name, icon, on]) => (
              <ViewButton key={name} aria-label={name} $on={on}>{icon}</ViewButton>
            ))}
          </ViewToolbar>
          <Watermark>
            <svg width="62" height="62" viewBox="0 0 62 62" aria-hidden="true">
              <path
                fillRule="evenodd"
                fill="#4a6478"
                d="M3 20C0 9 9 2 20 5C33 8 44 22 42 35C41 38 39 39 37 39C43 27 31 11 19 8C10 6 5 10 8 19C10 27 18 34 25 37C14 35 5 28 3 20Z"
              />
              <path
                fill="#a8434f"
                d="M40 22C48 17 57 20 58 30C59 43 47 58 35 58C31 58 28 56 28 53C39 57 52 43 53 31C53 23 47 21 40 22Z"
              />
              <path
                fill="#6f7f8c"
                d="M29 34C17 31 9 38 10 45C11 50 19 51 25 48C18 49 14 47 15 43C16 38 22 35 29 34ZM22 40C24 35 27 35 30 36C26 37 24 39 22 40Z"
              />
            </svg>
            <WatermarkText>
              <WatermarkName>野火论坛</WatermarkName>
              <WatermarkUrl>www.proewildfire.cn</WatermarkUrl>
            </WatermarkText>
          </Watermark>
        </Viewport>
      </Workspace>
    </Shell>
  );
}
